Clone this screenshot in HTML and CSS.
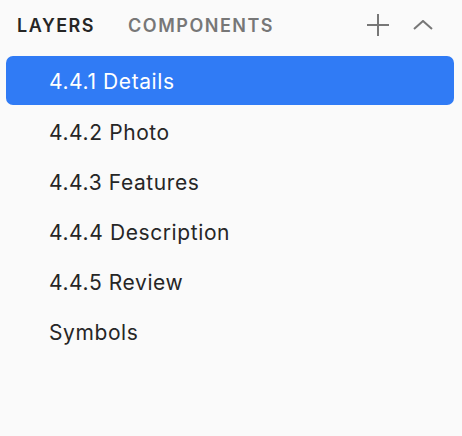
FILE: index.html
```html
<!DOCTYPE html>
<html lang="en">
<head>
    <meta charset="UTF-8">
    <title>Layers</title>
    <link rel="stylesheet" href="styles.css">
</head>
<body>
    <div class="panel">
        <div class="panel-header">
            <div class="tabs">
                <span class="tab active">LAYERS</span>
                <span class="tab">COMPONENTS</span>
            </div>
            <div class="actions">
                <svg class="icon-plus" width="22" height="22" viewBox="0 0 22 22">
                    <path d="M11 0V22M0 11H22" stroke="#777" stroke-width="2" fill="none"/>
                </svg>
                <svg class="icon-chevron" width="20" height="10" viewBox="0 0 20 10">
                    <path d="M1 9L10 1L19 9" stroke="#777" stroke-width="2" fill="none"/>
                </svg>
            </div>
        </div>
        <ul class="layer-list">
            <li class="layer selected">4.4.1 Details</li>
            <li class="layer">4.4.2 Photo</li>
            <li class="layer">4.4.3 Features</li>
            <li class="layer">4.4.4 Description</li>
            <li class="layer">4.4.5 Review</li>
            <li class="layer">Symbols</li>
        </ul>
    </div>
</body>
</html>
```

FILE: styles.css
```css
body {
    margin: 0;
    background-color: #fafafa;
    font-family: 'Inter', sans-serif;
    color: #262626;
}

.panel {
    width: 462px;
    height: 436px;
}

.panel-header {
    display: flex;
    align-items: center;
    justify-content: space-between;
    height: 50px;
    padding: 0 29px 0 17px;
}

.tabs {
    display: flex;
    gap: 33px;
}

.tab {
    font-size: 18px;
    font-weight: 600;
    letter-spacing: 1.5px;
    color: #777;
}

.tab.active {
    color: #262626;
}

.actions {
    display: flex;
    align-items: center;
    gap: 24px;
}

.layer-list {
    list-style: none;
    margin: 6px 0 0;
    padding: 0 8px 0 6px;
}

.layer {
    height: 50px;
    line-height: 54px;
    padding-left: 43px;
    font-size: 21px;
    letter-spacing: 0.6px;
    border-radius: 7px;
}

.layer.selected {
    height: 49px;
    line-height: 51px;
    margin-bottom: 1px;
    background-color: #307bf5;
    color: #fff;
}
```
